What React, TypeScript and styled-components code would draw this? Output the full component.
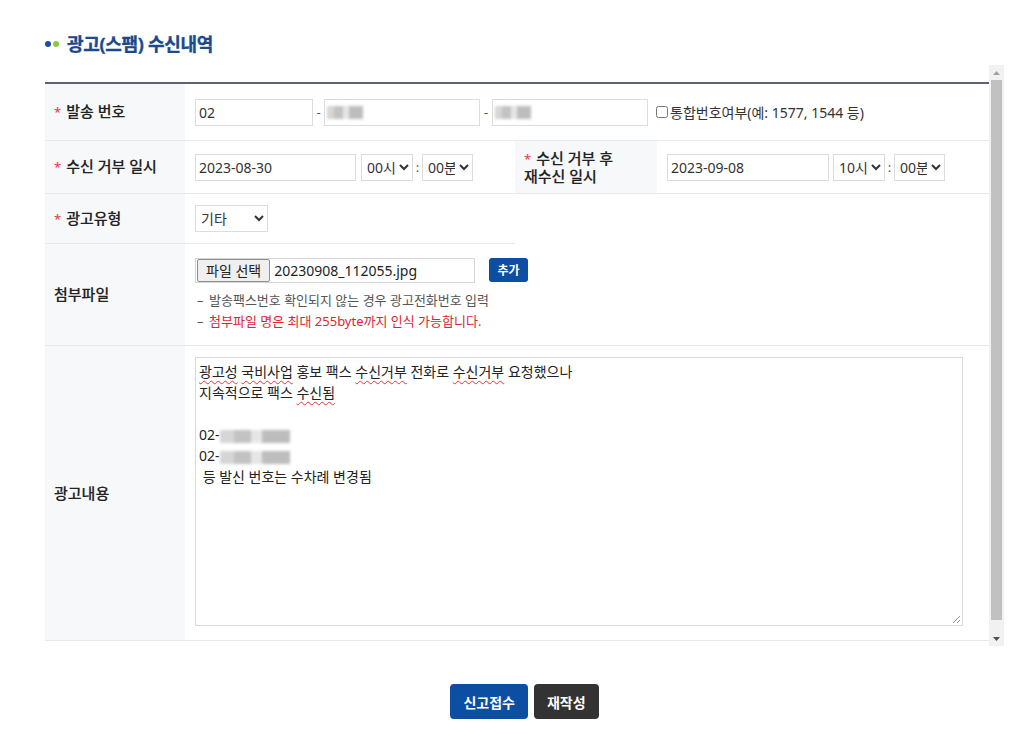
import React from 'react';
import styled, { createGlobalStyle } from 'styled-components';

const GlobalStyle = createGlobalStyle`
  html, body { margin: 0; padding: 0; background: #fff; }
  body {
    font-family: 'Noto Sans', 'Noto Sans CJK KR', sans-serif;
    color: #222;
  }
  * { box-sizing: border-box; }
`;

const Page = styled.div`
  padding: 0 20px 0 45px;
`;

const Title = styled.h2`
  margin: 0;
  padding: 32px 0 9px;
  display: flex;
  align-items: center;
  font-size: 18px;
  line-height: 24px;
  font-weight: 700;
  color: #1a4a8c;
  letter-spacing: -0.3px;
  -webkit-text-stroke: 0.35px #1a4a8c;
`;

const Dot = styled.span<{ $color: string; $last?: boolean }>`
  width: 6px;
  height: 6px;
  border-radius: 50%;
  background: ${p => p.$color};
  margin-right: ${p => (p.$last ? 8 : 2)}px;
`;

/* frame holding the list and a drawn scrollbar beside it */
const Frame = styled.div`
  display: flex;
  height: 581px;
`;

const Viewport = styled.div`
  flex: 1;
  overflow: hidden;
  padding-top: 17px;
`;

const Track = styled.div`
  width: 15px;
  background: #f1f1f1;
  display: flex;
  flex-direction: column;
`;

const Arrow = styled.div`
  height: 15px;
  display: flex;
  align-items: center;
  justify-content: center;
`;

const Thumb = styled.div`
  flex: 1;
  margin: 0 2px 11px;
  background: #c1c1c1;
`;

const Table = styled.div`
  border-top: 2px solid #5b6276;
`;

const Row = styled.div<{ $h: number }>`
  display: grid;
  grid-template-columns: 140px 330px 142px 1fr;
  height: ${p => p.$h}px;
`;

const Th = styled.div`
  background: #f7f8fa;
  border-bottom: 1px solid #e8e9eb;
  display: flex;
  align-items: center;
  padding: 0 10px 0 9px;
  font-size: 15px;
  font-weight: 500;
  line-height: 17px;
  color: #222;
  word-break: keep-all;
  -webkit-text-stroke: 0.15px #222;
`;

const Req = styled.span`
  color: #e8474c;
  font-size: 13px;
  margin-right: 5px;
  -webkit-text-stroke: 0;
`;

const Td = styled.div<{ $span?: number; $col?: boolean; $top?: number }>`
  grid-column: span ${p => p.$span || 1};
  border-bottom: 1px solid #e8e9eb;
  display: flex;
  flex-direction: ${p => (p.$col ? 'column' : 'row')};
  align-items: ${p => (p.$col || p.$top ? 'flex-start' : 'center')};
  justify-content: ${p => (p.$col ? 'center' : 'flex-start')};
  padding: ${p => p.$top || 0}px 10px 0;
`;

const Field = styled.input<{ $w: number }>`
  width: ${p => p.$w}px;
  height: 27px;
  border: 1px solid #dcdcdc;
  padding: 0 3px;
  font-family: inherit;
  font-size: 14px;
  color: #333;
  background: #fff;
  outline: none;
`;

const FieldBox = styled.div<{ $w: number }>`
  width: ${p => p.$w}px;
  height: 27px;
  border: 1px solid #dcdcdc;
  padding: 0 2px;
  display: flex;
  align-items: center;
  background: #fff;
`;

const Blur = styled.span<{ $w: number }>`
  display: inline-block;
  width: ${p => p.$w}px;
  height: 13px;
  background: linear-gradient(90deg, #d6d6d6 0 20%, #c2c2c2 20% 45%, #e6e6e6 45% 60%, #bdbdbd 60% 100%);
  filter: blur(1.6px);
  vertical-align: middle;
`;

const Sep = styled.span<{ $w: number }>`
  width: ${p => p.$w}px;
  text-align: center;
  font-size: 13px;
  color: #555;
`;

const Select = styled.select<{ $w: number }>`
  width: ${p => p.$w}px;
  height: 27px;
  border: 1px solid #dcdcdc;
  border-radius: 0;
  background: #fff;
  font-family: inherit;
  font-size: 14px;
  color: #333;
  padding: 0 1px;
`;

const Check = styled.label`
  display: flex;
  align-items: center;
  margin-left: 8px;
  font-size: 14px;
  color: #333;
  input { margin: 0 2px 0 0; width: 12px; height: 12px; }
`;

const FileBox = styled.div`
  width: 280px;
  height: 25px;
  border: 1px solid #d6d6d6;
  display: flex;
  align-items: center;
  padding: 0 1px;
  font-size: 14px;
  color: #222;
`;

const FileButton = styled.span`
  height: 23px;
  display: flex;
  align-items: center;
  padding: 0 8px;
  background: #efefef;
  border: 1px solid #8f8f8f;
  border-radius: 2px;
  margin-right: 4px;
`;

const Inline = styled.div`
  display: flex;
  align-items: center;
`;

const SmallButton = styled.button`
  margin-left: 14px;
  width: 39px;
  height: 24px;
  border: 0;
  border-radius: 3px;
  background: #0b4ea2;
  color: #fff;
  font-family: inherit;
  font-size: 12px;
  font-weight: 700;
  padding: 0;
`;

const Notes = styled.ul`
  list-style: none;
  margin: 7px 0 0;
  padding: 0 0 0 2px;
`;

const Note = styled.li<{ $red?: boolean }>`
  font-size: 13px;
  line-height: 21px;
  color: ${p => (p.$red ? '#e02331' : '#555')};
  &::before {
    content: '–';
    color: #555;
    display: inline-block;
    width: 12px;
  }
`;

const TextArea = styled.div`
  position: relative;
  width: 768px;
  height: 269px;
  border: 1px solid #d9d9d9;
  padding: 3px 3px;
  font-size: 14px;
  line-height: 21px;
  color: #222;
  white-space: pre-wrap;
`;

const Typo = styled.span`
  text-decoration: underline wavy #e53935;
  text-decoration-thickness: 1px;
  text-underline-offset: 3px;
`;

const Grip = styled.svg`
  position: absolute;
  right: 1px;
  bottom: 1px;
`;

const Actions = styled.div`
  display: flex;
  justify-content: center;
  gap: 6px;
  margin-top: 38px;
`;

const Button = styled.button<{ $dark?: boolean }>`
  height: 35px;
  padding: 0 13px;
  border: 0;
  border-radius: 4px;
  background: ${p => (p.$dark ? '#333' : '#0b4ea2')};
  color: #fff;
  font-family: inherit;
  font-size: 14px;
  font-weight: 700;
`;

const Label = ({ req, children }: { req?: boolean; children: React.ReactNode }) => (
  <Th>
    <span>
      {req && <Req>*</Req>}
      {children}
    </span>
  </Th>
);

const TimeSelects = ({ hour }: { hour: string }) => (
  <>
    <Select $w={52} defaultValue={hour}>
      <option>{hour}</option>
    </Select>
    <Sep $w={9}>:</Sep>
    <Select $w={51} defaultValue="00분">
      <option>00분</option>
    </Select>
  </>
);

export default function App() {
  return (
    <Page>
      <GlobalStyle />
      <Title>
        <Dot $color="#1b4f9c" />
        <Dot $color="#8dc63f" $last />
        광고(스팸) 수신내역
      </Title>
      <Frame>
        <Viewport>
          <Table>
            <Row $h={57}>
              <Label req>발송 번호</Label>
              <Td $span={3}>
                <Field $w={118} defaultValue="02" readOnly />
                <Sep $w={11}>-</Sep>
                <FieldBox $w={156}><Blur $w={36} /></FieldBox>
                <Sep $w={12}>-</Sep>
                <FieldBox $w={156}><Blur $w={36} /></FieldBox>
                <Check>
                  <input type="checkbox" />
                  통합번호여부(예: 1577, 1544 등)
                </Check>
              </Td>
            </Row>
            <Row $h={53}>
              <Label req>수신 거부 일시</Label>
              <Td>
                <Field $w={161} defaultValue="2023-08-30" readOnly style={{ marginRight: 5 }} />
                <TimeSelects hour="00시" />
              </Td>
              <Label req>수신 거부 후 재수신 일시</Label>
              <Td>
                <Field $w={162} defaultValue="2023-09-08" readOnly style={{ marginRight: 4 }} />
                <TimeSelects hour="10시" />
              </Td>
            </Row>
            <Row $h={50}>
              <Label req>광고유형</Label>
              <Td>
                <Select $w={73} defaultValue="기타">
                  <option>기타</option>
                </Select>
              </Td>
            </Row>
            <Row $h={102}>
              <Label>첨부파일</Label>
              <Td $span={3} $col>
                <Inline>
                  <FileBox>
                    <FileButton>파일 선택</FileButton>
                    20230908_112055.jpg
                  </FileBox>
                  <SmallButton>추가</SmallButton>
                </Inline>
                <Notes>
                  <Note>발송팩스번호 확인되지 않는 경우 광고전화번호 입력</Note>
                  <Note $red>첨부파일 명은 최대 255byte까지 인식 가능합니다.</Note>
                </Notes>
              </Td>
            </Row>
            <Row $h={295}>
              <Label>광고내용</Label>
              <Td $span={3} $top={11}>
                <TextArea>
                  <Typo>광고성</Typo> <Typo>국비사업</Typo> 홍보 팩스 <Typo>수신거부</Typo> 전화로 <Typo>수신거부</Typo> 요청했으나{'\n'}
                  지속적으로 팩스 <Typo>수신됨</Typo>{'\n'}
                  {'\n'}
                  02-<Blur $w={70} />{'\n'}
                  02-<Blur $w={70} />{'\n'}
                  {' '}등 발신 번호는 수차례 변경됨
                  <Grip width="10" height="10" viewBox="0 0 10 10">
                    <path d="M9 2 L2 9 M9 6 L6 9" stroke="#999" strokeWidth="1" />
                  </Grip>
                </TextArea>
              </Td>
            </Row>
          </Table>
        </Viewport>
        <Track>
          <Arrow>
            <svg width="7" height="4" viewBox="0 0 7 4"><path d="M3.5 0 L7 4 H0 Z" fill="#a3a3a3" /></svg>
          </Arrow>
          <Thumb />
          <Arrow>
            <svg width="7" height="4" viewBox="0 0 7 4"><path d="M0 0 H7 L3.5 4 Z" fill="#505050" /></svg>
          </Arrow>
        </Track>
      </Frame>
      <Actions>
        <Button>신고접수</Button>
        <Button $dark>재작성</Button>
      </Actions>
    </Page>
  );
}
